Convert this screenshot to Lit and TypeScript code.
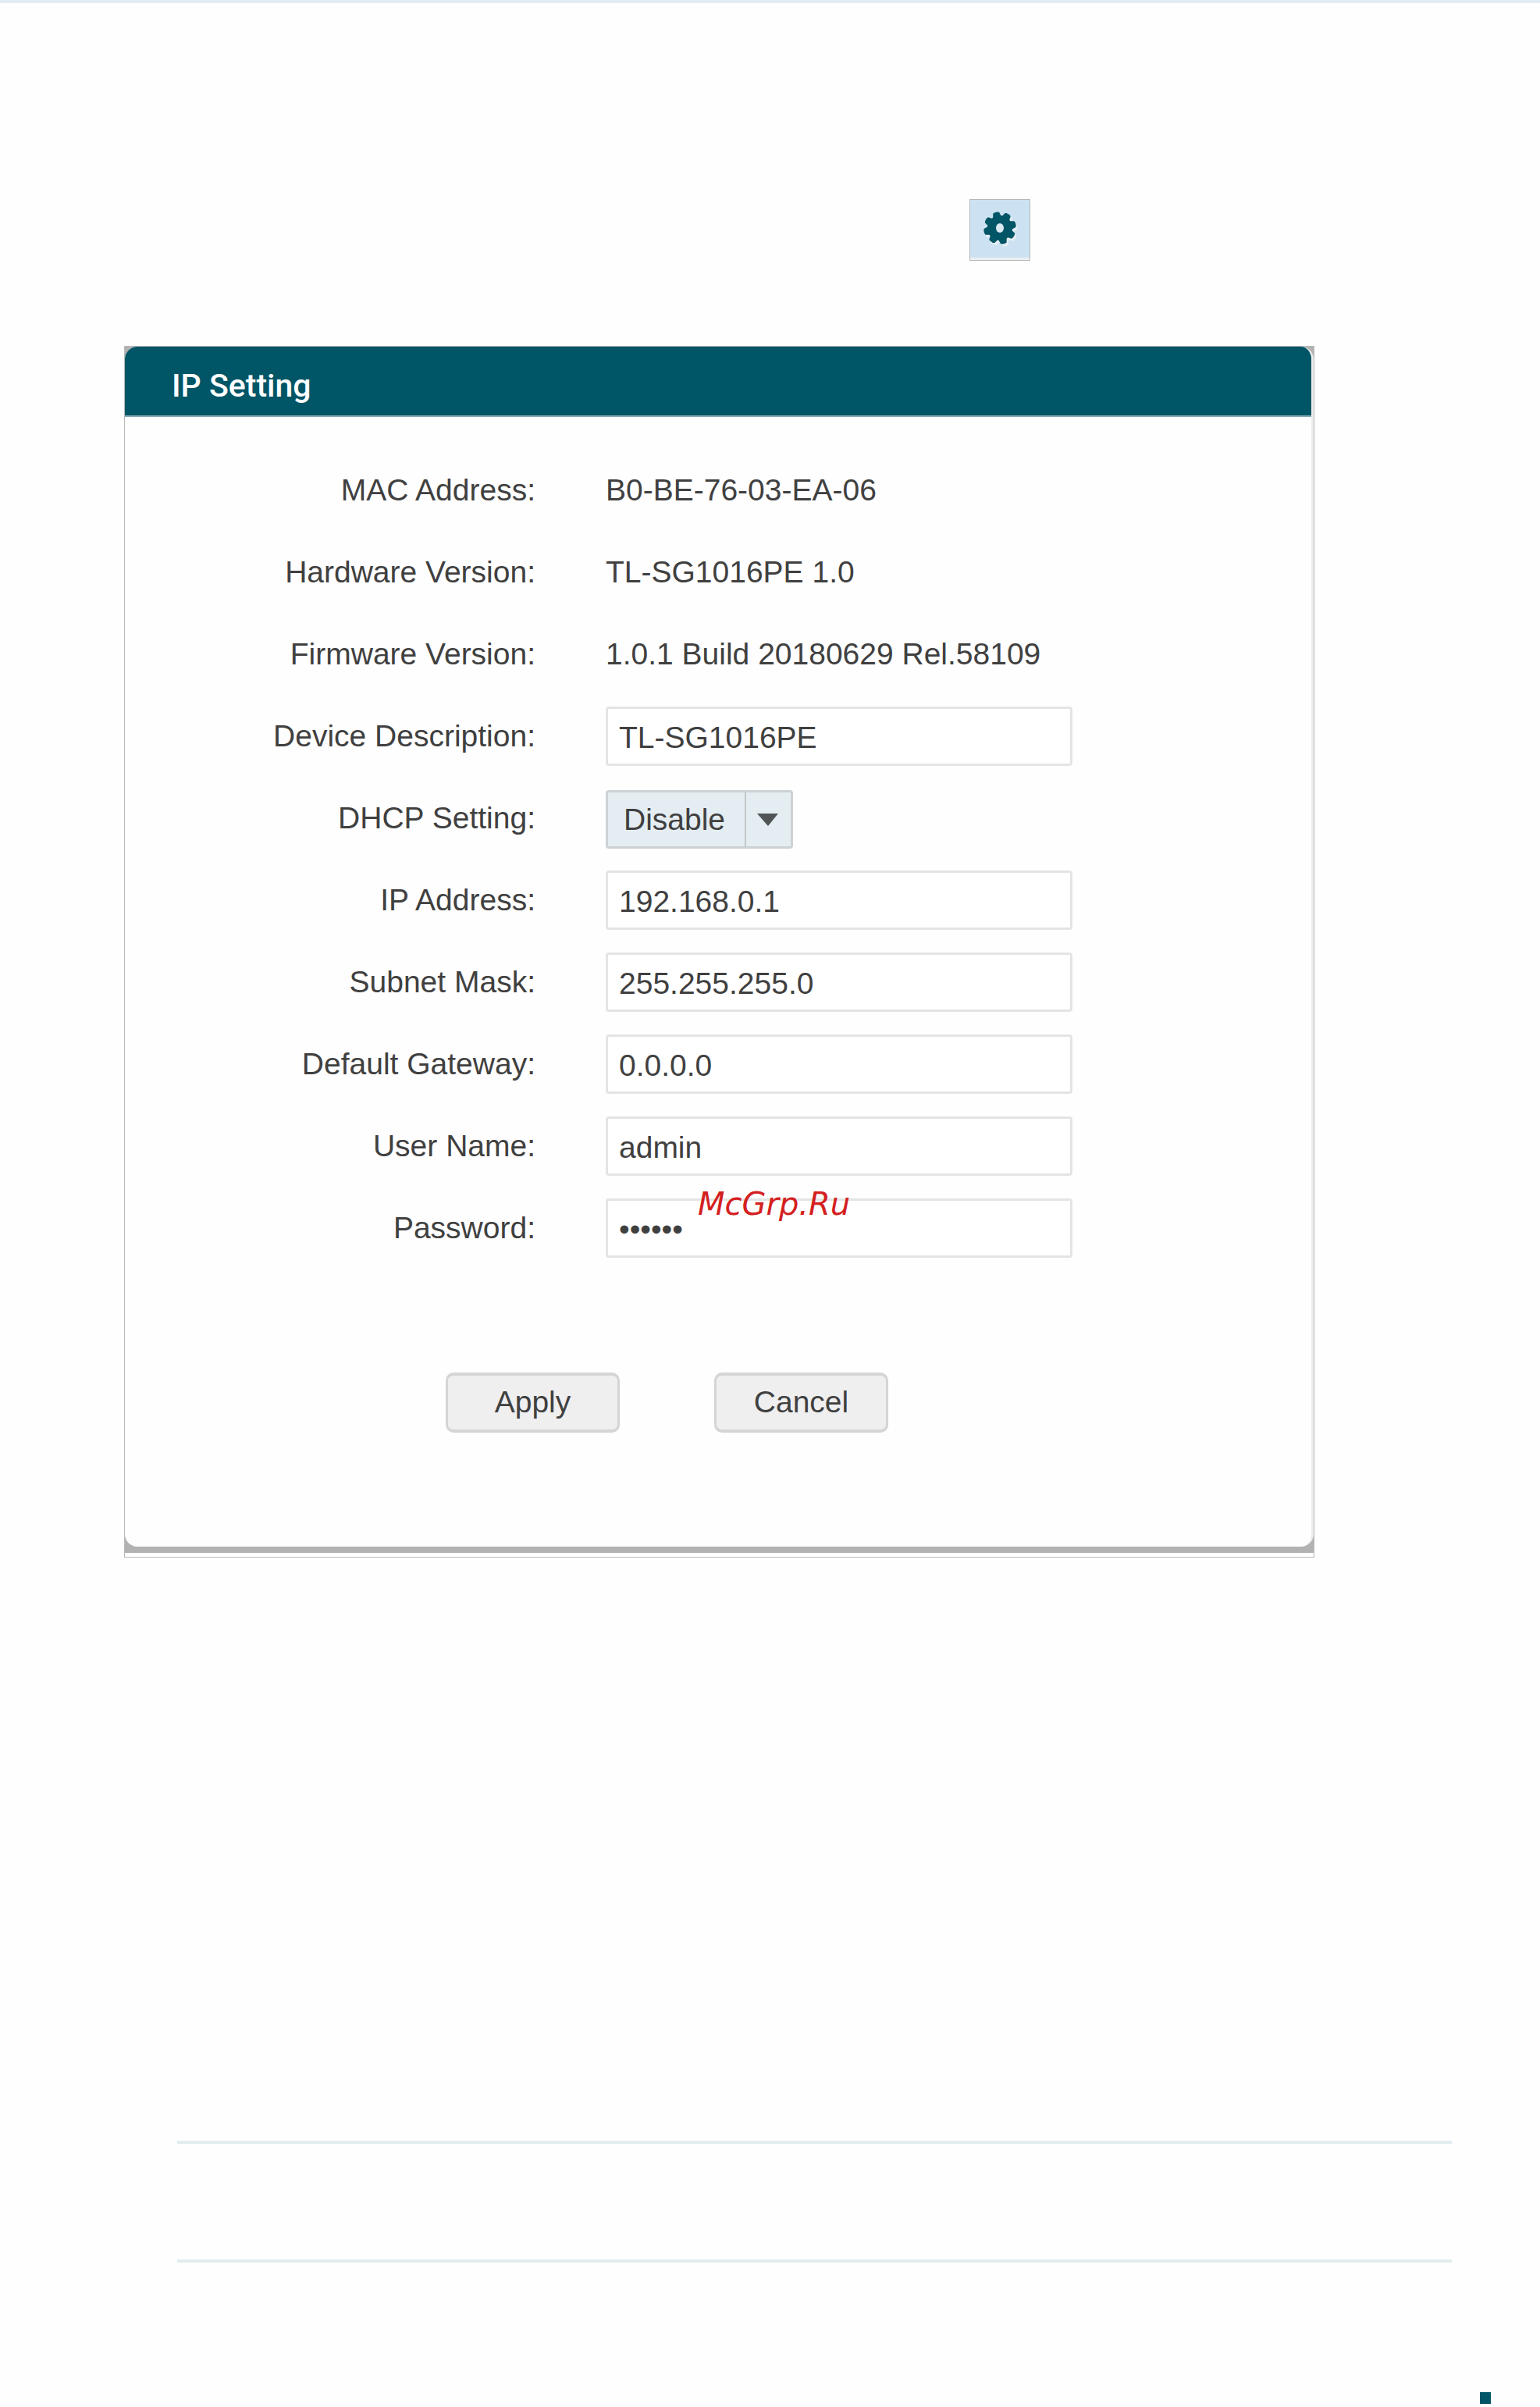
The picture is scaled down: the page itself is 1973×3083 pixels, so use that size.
import { LitElement, html, css, nothing } from "lit";
import { customElement, property } from "lit/decorators.js";

type Field = {
  id: string;
  label: string;
  value: string;
  kind: "static" | "text" | "password" | "select";
  mark?: string;
};

const FIELDS: Field[] = [
  { id: "mac", label: "MAC Address:", value: "B0-BE-76-03-EA-06", kind: "static" },
  { id: "hardware", label: "Hardware Version:", value: "TL-SG1016PE 1.0", kind: "static" },
  { id: "firmware", label: "Firmware Version:", value: "1.0.1 Build 20180629 Rel.58109", kind: "static" },
  { id: "description", label: "Device Description:", value: "TL-SG1016PE", kind: "text" },
  { id: "dhcp", label: "DHCP Setting:", value: "Disable", kind: "select" },
  { id: "ip", label: "IP Address:", value: "192.168.0.1", kind: "text" },
  { id: "mask", label: "Subnet Mask:", value: "255.255.255.0", kind: "text" },
  { id: "gateway", label: "Default Gateway:", value: "0.0.0.0", kind: "text" },
  { id: "user", label: "User Name:", value: "admin", kind: "text" },
  { id: "password", label: "Password:", value: "secret", kind: "password", mark: "McGrp.Ru" },
];

@customElement("setting-row")
export class SettingRow extends LitElement {
  @property({ attribute: false }) field!: Field;

  static styles = css`
    :host {
      display: block;
    }
    .row {
      position: relative;
      display: grid;
      grid-template-columns: 526px minmax(0, 598px);
      column-gap: 90px;
      align-items: center;
      height: 105px;
      color: #404040;
      font-family: "Liberation Sans", Arial, sans-serif;
      font-size: 39px;
      line-height: 44px;
    }
    .label {
      text-align: right;
    }
    .input {
      box-sizing: border-box;
      width: 100%;
      height: 76px;
      margin: 0;
      padding: 4px 14px 0;
      border: 3px solid #e3e5e5;
      border-radius: 4px;
      background: #fff;
      color: inherit;
      font: inherit;
      outline-color: #005566;
    }
    .picker {
      display: grid;
      justify-self: start;
      width: 240px;
      padding-top: 4px;
    }
    .select,
    .arrow {
      grid-area: 1 / 1;
    }
    .select {
      box-sizing: border-box;
      width: 100%;
      height: 75px;
      margin: 0;
      padding: 0 60px 0 20px;
      border: 3px solid #cdd2d4;
      border-radius: 4px;
      background: #e4edf2;
      color: inherit;
      font: inherit;
      appearance: none;
    }
    .arrow {
      justify-self: end;
      align-self: center;
      width: 62px;
      height: 70px;
      pointer-events: none;
    }
    .mark {
      position: absolute;
      left: 734px;
      top: -2px;
      color: #d42020;
      font: italic 40px/48px "DejaVu Sans", sans-serif;
      pointer-events: none;
    }
  `;

  private control(f: Field) {
    if (f.kind === "static") return html`<output id=${f.id}>${f.value}</output>`;
    if (f.kind === "select") {
      return html`<div class="picker">
        <select class="select" id=${f.id}>
          <option selected>Disable</option>
          <option>Enable</option>
        </select>
        <svg class="arrow" viewBox="0 0 62 70" aria-hidden="true">
          <path d="M1 0V70" stroke="#c3c8ca" stroke-width="2" />
          <path d="M16 27H43L30 43Z" fill="#505456" />
        </svg>
      </div>`;
    }
    return html`<input class="input" id=${f.id} type=${f.kind} .value=${f.value} />`;
  }

  render() {
    const f = this.field;
    return html`<div class="row">
      <label class="label" for=${f.id}>${f.label}</label>
      ${this.control(f)}
      ${f.mark ? html`<span class="mark">${f.mark}</span>` : nothing}
    </div>`;
  }
}

@customElement("app-root")
export class AppRoot extends LitElement {
  static styles = css`
    :host {
      display: block;
      background: #fefefe;
    }
    .page {
      display: flex;
      flex-direction: column;
      border-top: 4px solid #e3ecf2;
      padding-bottom: 4px;
    }
    .toolbar {
      display: flex;
      justify-content: flex-end;
      padding: 251px 653px 109px 0;
    }
    .gear {
      box-sizing: border-box;
      width: 78px;
      height: 79px;
      margin: 0;
      padding: 0;
      border: 1px solid #b5b8bb;
      background: linear-gradient(#cce2f2 73px, #eeeff0 75px);
    }
    .gear-icon {
      display: block;
      width: 76px;
      height: 77px;
    }
    .card {
      margin: 0 289px 0 159px;
      border: 1px solid #b9b9b9;
      padding-bottom: 5px;
      background: #fff;
    }
    .frame {
      padding-bottom: 8px;
      background: #b2b2b2;
    }
    .panel {
      border-right: 3px solid #ececec;
      border-radius: 16px;
      overflow: hidden;
      background: #fefefe;
    }
    .title {
      margin: 0;
      padding: 26px 60px 14px;
      border-bottom: 2px solid #7fa9b1;
      background: #005566;
      color: #fff;
      font: 500 41px/48px Roboto, sans-serif;
    }
    .form {
      padding: 41px 0 146px;
    }
    .actions {
      display: flex;
      gap: 121px;
      padding: 133px 0 0 411px;
    }
    .button {
      box-sizing: border-box;
      width: 223px;
      height: 77px;
      margin: 0;
      padding: 0 0 2px;
      border: 4px solid #d5d5d5;
      border-left-width: 3px;
      border-right-width: 3px;
      border-radius: 10px;
      background: #efefef;
      color: #404040;
      font: 39px/44px "Liberation Sans", Arial, sans-serif;
    }
    .note {
      height: 148px;
      margin: 747px 113px 166px 227px;
      border: solid #e2edf0;
      border-width: 4px 0;
    }
    .marker {
      align-self: flex-end;
      width: 14px;
      height: 15px;
      margin-right: 63px;
      background: #005566;
    }
  `;

  render() {
    const teeth = [0, 45, 90, 135, 180, 225, 270, 315];
    return html`<main class="page">
      <div class="toolbar">
        <button class="gear" type="button" aria-label="Settings">
          <svg class="gear-icon" viewBox="0 0 76 77" aria-hidden="true">
            <defs>
              <g id="cog">
                <circle r="16" />
                ${teeth.map(
                  (a) => html`<svg x="-24" y="-24" width="48" height="48" viewBox="-24 -24 48 48">
                    <path d="M-6 -12L-4 -20Q0 -22 4 -20L6 -12Z" transform="rotate(${a - 14})" />
                  </svg>`,
                )}
              </g>
            </defs>
            <use href="#cog" x="40" y="39" fill="#e6eff5" />
            <use href="#cog" x="38" y="36" fill="#005566" />
            <ellipse cx="38" cy="36" rx="5" ry="6" fill="#dbe9f2" />
          </svg>
        </button>
      </div>
      <section class="card">
        <div class="frame">
          <div class="panel">
            <h1 class="title">IP Setting</h1>
            <form class="form" @submit=${(e: Event) => e.preventDefault()}>
              ${FIELDS.map((f) => html`<setting-row .field=${f}></setting-row>`)}
              <div class="actions">
                <button class="button" type="submit">Apply</button>
                <button class="button" type="reset">Cancel</button>
              </div>
            </form>
          </div>
        </div>
      </section>
      <div class="note"></div>
      <div class="marker"></div>
    </main>`;
  }
}
